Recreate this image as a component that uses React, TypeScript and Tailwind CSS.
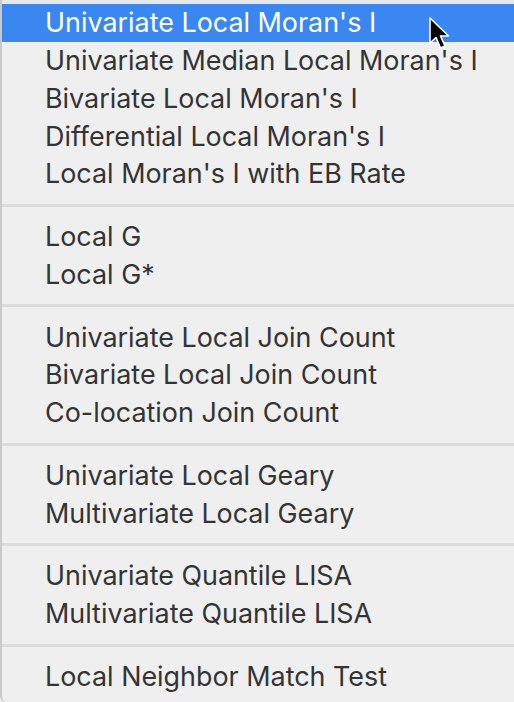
import React from "react";

const groups: string[][] = [
  [
    "Univariate Local Moran's I",
    "Univariate Median Local Moran's I",
    "Bivariate Local Moran's I",
    "Differential Local Moran's I",
    "Local Moran's I with EB Rate",
  ],
  ["Local G", "Local G*"],
  ["Univariate Local Join Count", "Bivariate Local Join Count", "Co-location Join Count"],
  ["Univariate Local Geary", "Multivariate Local Geary"],
  ["Univariate Quantile LISA", "Multivariate Quantile LISA"],
  ["Local Neighbor Match Test"],
];

export default function App() {
  return (
    <div className="relative w-[514px] h-[702px] overflow-hidden bg-[#ececec]">
      <div
        className="w-[514px] h-[702px] bg-[#efefef] border-l-2 border-[#c9c9c9] rounded-bl-[6px] flex flex-col"
        style={{ fontFamily: "Inter, 'Noto Sans', sans-serif" }}
      >
        <div className="h-[4px] bg-[#e8e8e8]" />
        {groups.map((g, gi) => (
          <div key={gi} className="flex flex-col">
            {gi > 0 && (
              <div className="h-[25px] flex items-center">
                <div className="w-full h-[3px] bg-[#dcdcdc]" />
              </div>
            )}
            {g.map((item, ii) => {
              const active = gi === 0 && ii === 0;
              return (
                <div
                  key={item}
                  className={
                    "h-[37.75px] flex items-center pl-[43px] text-[26.9px] leading-none " +
                    (active ? "bg-[#3b87f1] text-white" : "text-[#343434]")
                  }
                >
                  {item}
                </div>
              );
            })}
          </div>
        ))}
      </div>
      <svg
        className="absolute left-[428px] top-[17px]"
        width="24"
        height="34"
        viewBox="0 0 24 34"
      >
        <path
          d="M2 1 L2 26 L8 20.5 L12.5 31 L17 29 L12.5 19 L20.5 19 Z"
          fill="#000"
          stroke="#fff"
          strokeWidth="1.6"
          strokeLinejoin="round"
        />
      </svg>
    </div>
  );
}
